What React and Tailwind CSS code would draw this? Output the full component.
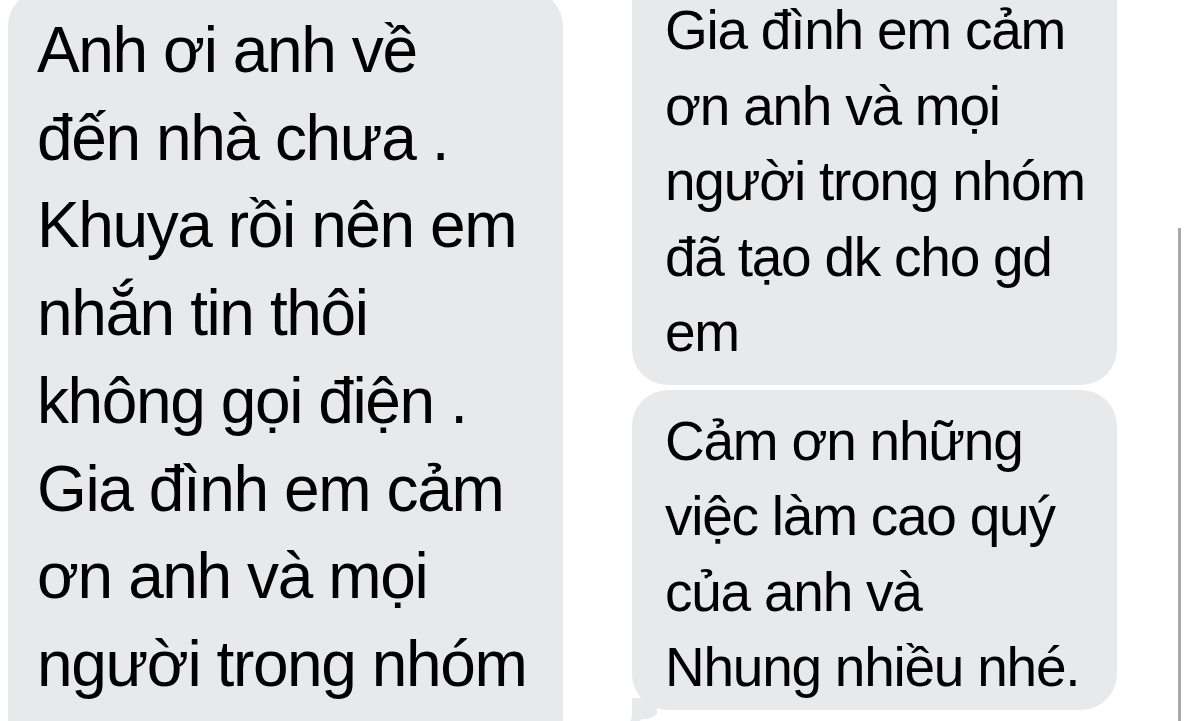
const LEFT = [
  "Anh ơi anh về",
  "đến nhà chưa .",
  "Khuya rồi nên em",
  "nhắn tin thôi",
  "không gọi điện .",
  "Gia đình em cảm",
  "ơn anh và mọi",
  "người trong nhóm",
]

const RIGHT_TOP = [
  "Gia đình em cảm",
  "ơn anh và mọi",
  "người trong nhóm",
  "đã tạo dk cho gd",
  "em",
]

const RIGHT_BOTTOM = [
  "Cảm ơn những",
  "việc làm cao quý",
  "của anh và",
  "Nhung nhiều nhé.",
]

function Lines({ lines }) {
  return lines.map((l, i) => (
    <div key={i} className="whitespace-nowrap">
      {l}
    </div>
  ))
}

export default function App() {
  return (
    <div
      className="w-[1200px] h-[721px] overflow-hidden bg-white flex items-start text-black"
      style={{ fontFamily: '"Liberation Sans", Arial, sans-serif' }}
    >
      <div className="ml-[8px] w-[555px] -mt-[10px] h-[800px] shrink-0 rounded-[36px] bg-[#e8e9eb] pt-[17px] pl-[29px] text-[64px] leading-[87.7px] tracking-[-1.4px]">
        <Lines lines={LEFT} />
      </div>

      <div className="ml-[69px] w-[485px] shrink-0 flex flex-col -mt-[40px]">
        <div className="rounded-[36px] bg-[#e8e9eb] pt-[33px] pb-[14px] pl-[33px] text-[55px] leading-[75.5px] tracking-[-1.25px]">
          <Lines lines={RIGHT_TOP} />
        </div>
        <div className="relative mt-[5px] rounded-[36px] bg-[#e8e9eb] pt-[14px] pb-[4px] pl-[33px] text-[55px] leading-[75.5px] tracking-[-1.25px]">
          <Lines lines={RIGHT_BOTTOM} />
          <svg
            className="absolute left-[-5px] bottom-[-14px]"
            width="30"
            height="26"
            viewBox="0 0 30 26"
          >
            <path
              d="M5 0 L5 16 C5 21 3 24 0 26 C7 26 12 24 15 21 C19 22 25 20 30 16 L30 0 Z"
              fill="#e8e9eb"
            />
          </svg>
        </div>
      </div>

      <div className="ml-[61px] mt-[228px] w-[3px] h-[500px] bg-[#a9a9a9] shrink-0" />
    </div>
  )
}
